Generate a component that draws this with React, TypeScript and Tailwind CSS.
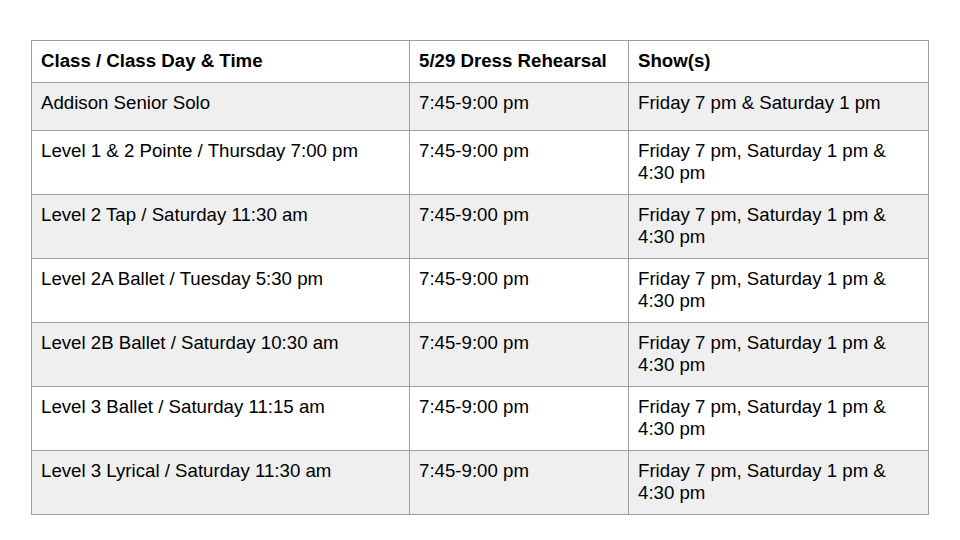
import React from "react";

const rows: Array<{ cls: string; rehearsal: string; shows: string }> = [
  { cls: "Addison Senior Solo", rehearsal: "7:45-9:00 pm", shows: "Friday 7 pm & Saturday 1 pm" },
  { cls: "Level 1 & 2 Pointe / Thursday 7:00 pm", rehearsal: "7:45-9:00 pm", shows: "Friday 7 pm, Saturday 1 pm & 4:30 pm" },
  { cls: "Level 2 Tap / Saturday 11:30 am", rehearsal: "7:45-9:00 pm", shows: "Friday 7 pm, Saturday 1 pm & 4:30 pm" },
  { cls: "Level 2A Ballet / Tuesday 5:30 pm", rehearsal: "7:45-9:00 pm", shows: "Friday 7 pm, Saturday 1 pm & 4:30 pm" },
  { cls: "Level 2B Ballet / Saturday 10:30 am", rehearsal: "7:45-9:00 pm", shows: "Friday 7 pm, Saturday 1 pm & 4:30 pm" },
  { cls: "Level 3 Ballet / Saturday 11:15 am", rehearsal: "7:45-9:00 pm", shows: "Friday 7 pm, Saturday 1 pm & 4:30 pm" },
  { cls: "Level 3 Lyrical / Saturday 11:30 am", rehearsal: "7:45-9:00 pm", shows: "Friday 7 pm, Saturday 1 pm & 4:30 pm" },
];

const cell = "border-r border-b border-[#9e9e9e] px-[9px] pt-[9px]";

export default function App() {
  return (
    <div
      className="w-[960px] h-[540px] bg-white text-black overflow-hidden"
      style={{ fontFamily: '"Liberation Sans", Arial, sans-serif' }}
    >
      <div className="ml-[31px] mt-[40px] w-[898px] border-l border-t border-[#9e9e9e] text-[18.67px] leading-[22px]">
        <div className="grid grid-cols-[378px_219px_300px] h-[42px] font-bold">
          <div className={cell}>Class / Class Day &amp; Time</div>
          <div className={cell}>5/29 Dress Rehearsal</div>
          <div className={cell}>Show(s)</div>
        </div>
        {rows.map((r, i) => (
          <div
            key={r.cls}
            className={`grid grid-cols-[378px_219px_300px] ${i === 0 ? "h-[48px]" : "h-[64px]"} ${
              i % 2 === 0 ? "bg-[#efefef]" : "bg-white"
            }`}
          >
            <div className={cell}>{r.cls}</div>
            <div className={cell}>{r.rehearsal}</div>
            <div className={cell}>{r.shows}</div>
          </div>
        ))}
      </div>
    </div>
  );
}
